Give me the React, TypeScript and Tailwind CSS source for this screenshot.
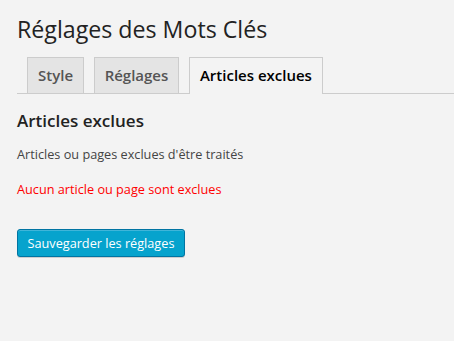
const tabs = [
  { label: "Style", active: false },
  { label: "Réglages", active: false },
  { label: "Articles exclues", active: true },
];

export default function App() {
  return (
    <div className="min-h-screen bg-[#f3f3f3] pl-[17px] font-['Open_Sans',sans-serif] text-[12.7px] text-[#444]">
      <h2 className="pt-[15px] text-[23.2px] leading-[29px] font-normal text-[#222]">
        Réglages des Mots Clés
      </h2>

      <div className="mt-[13px] flex items-start gap-[10px] border-b border-[#ccc] pl-[10px]">
        {tabs.map((t) =>
          t.active ? (
            <div
              key={t.label}
              className="-mb-px h-[37px] border border-b-0 border-[#ccc] bg-[#f3f3f3] pl-[10px] pr-[9.6px] pt-[5px] text-[15px] leading-[24px] font-semibold text-black"
            >
              {t.label}
            </div>
          ) : (
            <div
              key={t.label}
              className="h-[36px] border border-b-0 border-[#ccc] bg-[#e4e4e4] pl-[10px] pr-[9.6px] pt-[5px] text-[15px] leading-[24px] font-semibold text-[#555]"
            >
              {t.label}
            </div>
          )
        )}
      </div>

      <h3 className="mt-[17px] text-[17px] leading-[20px] font-semibold text-[#222]">
        Articles exclues
      </h3>
      <p className="mt-[13px] leading-[20px]">Articles ou pages exclues d'être traités</p>
      <p className="mt-[15px] leading-[20px] text-[#ff0000]">Aucun article ou page sont exclues</p>

      <button className="mt-[30px] h-[28px] rounded-[3px] border border-[#0074a2] bg-[#06a3cd] px-[9.5px] pb-px text-[12.7px] leading-[26px] text-white shadow-[inset_0_1px_0_rgba(120,200,230,0.5),0_1px_0_rgba(0,0,0,0.15)]">
        Sauvegarder les réglages
      </button>
    </div>
  );
}
